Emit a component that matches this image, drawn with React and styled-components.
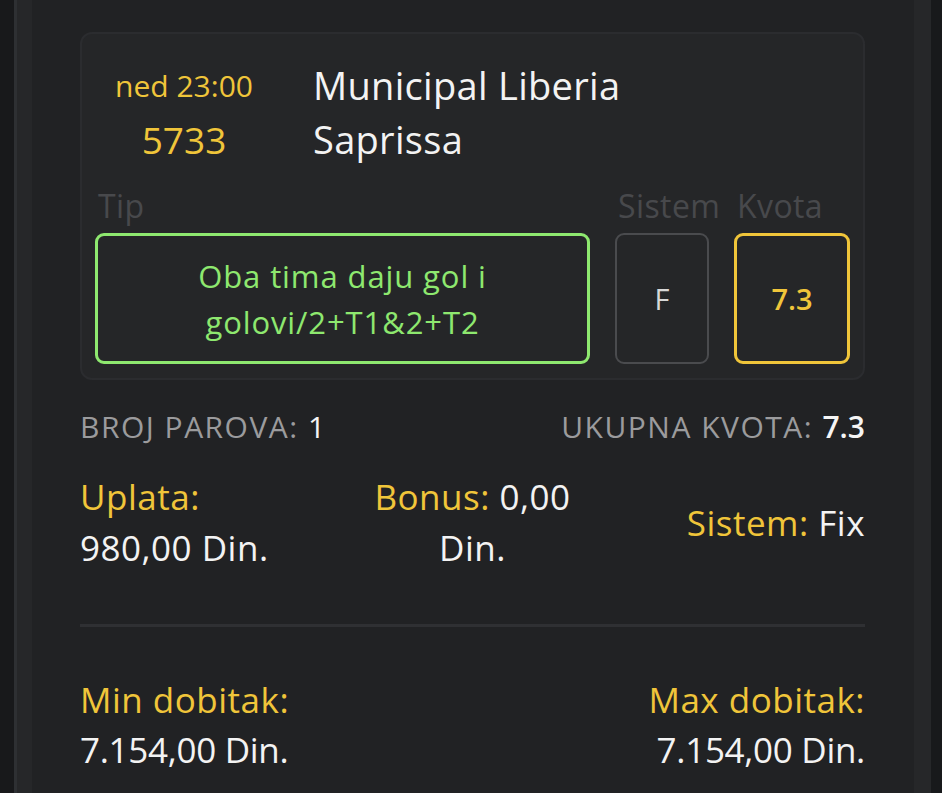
import React from 'react';
import styled, { createGlobalStyle } from 'styled-components';

const Global = createGlobalStyle`
  html, body { margin: 0; padding: 0; background: #18191b; }
  body { font-family: 'Open Sans', 'Noto Sans', sans-serif; }
  #root { height: 793px; overflow: hidden; }
`;

const Shell = styled.div`
  display: flex;
  height: 793px;
  padding: 0 11px 0 14px;
`;

const Rail = styled.div`
  width: 15px;
  background: #262729;
  border-left: 3px solid #2e3033;
`;

const RailRight = styled.div`
  width: 17px;
  background: #262729;
`;

const Main = styled.div`
  flex: 1;
  background: #212224;
  padding: 32px 49px 0 48px;
  display: flex;
  flex-direction: column;
`;

const Card = styled.div`
  background: #252628;
  border: 2px solid #2b2c2f;
  border-radius: 12px;
  padding: 24px 13px 14px 13px;
  display: flex;
  flex-direction: column;
`;

const MatchRow = styled.div`
  display: flex;
  align-items: center;
`;

const TimeCol = styled.div`
  width: 178px;
  display: flex;
  flex-direction: column;
  align-items: center;
  color: #f0c53a;
`;

const Time = styled.div`
  font-size: 30px;
  line-height: 56px;
`;

const Code = styled.div`
  font-size: 37px;
  line-height: 52px;
`;

const Teams = styled.div`
  padding-left: 40px;
  color: #f3f3f3;
  font-size: 38px;
  line-height: 54px;
  letter-spacing: 0.3px;
`;

const Bets = styled.div`
  display: flex;
  gap: 25px;
  margin-top: 20px;
`;

const Field = styled.div`
  display: flex;
  flex-direction: column;
  flex: ${p => (p.$grow ? 1 : 'none')};
  width: ${p => p.$w || 'auto'};
`;

const Label = styled.div`
  color: #48494c;
  font-size: 32px;
  line-height: 40px;
  letter-spacing: 0.4px;
  padding-left: ${p => p.$pad || 0}px;
  white-space: nowrap;
`;

const Box = styled.div`
  height: 131px;
  box-sizing: border-box;
  border: ${p => p.$bw || 3}px solid ${p => p.$c};
  border-radius: 9px;
  color: ${p => p.$t};
  display: flex;
  align-items: center;
  justify-content: center;
  text-align: center;
  font-size: ${p => p.$fs || 31}px;
  font-weight: ${p => p.$fw || 400};
  line-height: 46px;
  letter-spacing: ${p => p.$ls ?? 0.9}px;
  margin-top: 7px;
`;

const SummaryRow = styled.div`
  display: flex;
  justify-content: space-between;
  margin-top: 30px;
  font-size: 30px;
  line-height: 34px;
  letter-spacing: 1.5px;
  text-transform: uppercase;
  color: #9b9b9d;
`;

const Strong = styled.span`
  color: #f5f5f5;
  font-weight: ${p => p.$fw || 400};
  letter-spacing: 0;
`;

const Stake = styled.div`
  display: grid;
  grid-template-columns: 1fr 1fr 1fr;
  margin-top: 27px;
  font-size: 35px;
  line-height: 51px;
  letter-spacing: 0.5px;
  color: #f3f3f3;
`;

const Cell = styled.div`
  text-align: ${p => p.$align || 'left'};
  align-self: center;
  white-space: nowrap;
`;

const Gold = styled.span`
  color: #f0c53a;
`;

const Divider = styled.div`
  height: 3px;
  background: #2f3033;
  margin-top: 51px;
`;

const Wins = styled.div`
  display: flex;
  justify-content: space-between;
  margin-top: 48px;
  font-size: 35px;
  line-height: 50px;
  letter-spacing: 0.5px;
  color: #f3f3f3;
`;

const WinCol = styled.div`
  text-align: ${p => p.$align || 'left'};
`;

const Amount = styled.div`
  letter-spacing: -0.3px;
`;

export default function App() {
  return (
    <>
      <Global />
      <Shell>
        <Rail />
        <Main>
          <Card>
            <MatchRow>
              <TimeCol>
                <Time>ned 23:00</Time>
                <Code>5733</Code>
              </TimeCol>
              <Teams>
                <div>Municipal Liberia</div>
                <div>Saprissa</div>
              </Teams>
            </MatchRow>
            <Bets>
              <Field $grow>
                <Label $pad={3}>Tip</Label>
                <Box $c="#8ee86f" $t="#8ee86f">
                  Oba tima daju gol i<br />golovi/2+T1&amp;2+T2
                </Box>
              </Field>
              <Field $w="94px">
                <Label $pad={3}>Sistem</Label>
                <Box $c="#4a4b4e" $t="#d8d8d8" $bw={2} $fs={29} $ls={0}>F</Box>
              </Field>
              <Field $w="116px">
                <Label $pad={3}>Kvota</Label>
                <Box $c="#f0c53a" $t="#f0c53a" $fs={29} $fw={600} $ls={0}>7.3</Box>
              </Field>
            </Bets>
          </Card>
          <SummaryRow>
            <div>Broj parova: <Strong>1</Strong></div>
            <div>Ukupna kvota: <Strong $fw={600}>7.3</Strong></div>
          </SummaryRow>
          <Stake>
            <Cell>
              <Gold>Uplata:</Gold>
              <br />980,00 Din.
            </Cell>
            <Cell $align="center">
              <Gold>Bonus:</Gold> 0,00
              <br />Din.
            </Cell>
            <Cell $align="right">
              <Gold>Sistem:</Gold> Fix
            </Cell>
          </Stake>
          <Divider />
          <Wins>
            <WinCol>
              <Gold>Min dobitak:</Gold>
              <Amount>7.154,00 Din.</Amount>
            </WinCol>
            <WinCol $align="right">
              <Gold>Max dobitak:</Gold>
              <Amount>7.154,00 Din.</Amount>
            </WinCol>
          </Wins>
        </Main>
        <RailRight />
      </Shell>
    </>
  );
}
